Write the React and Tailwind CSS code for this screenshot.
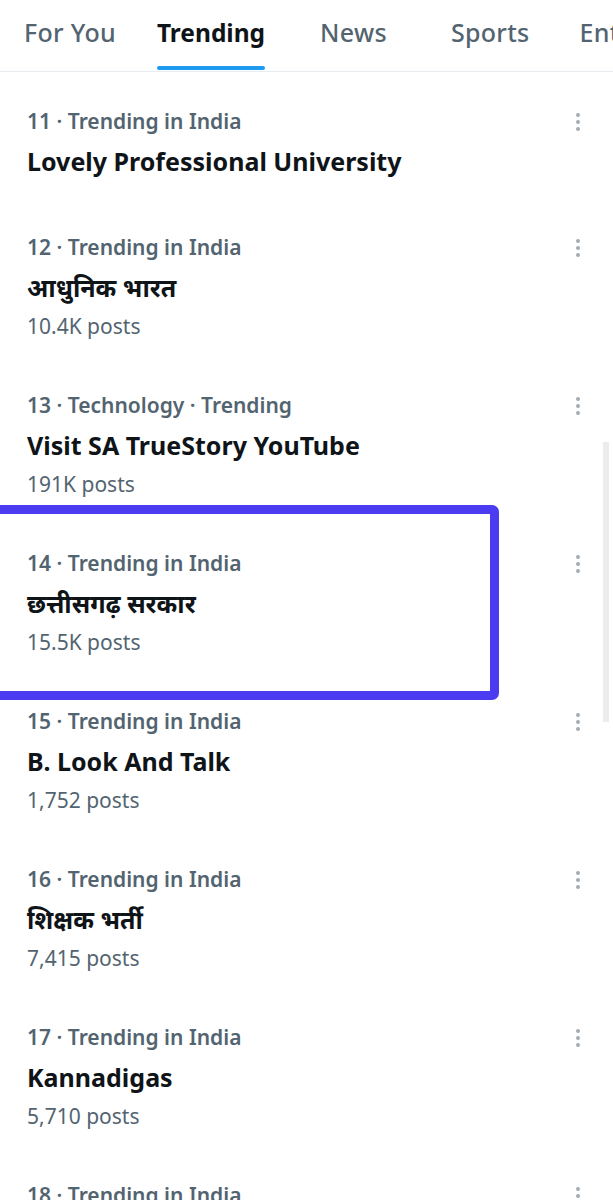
const tabs = [
  { label: "For You", active: false, cls: "ml-[24px]" },
  { label: "Trending", active: true, cls: "ml-[41px]" },
  { label: "News", active: false, cls: "ml-[55px]" },
  { label: "Sports", active: false, cls: "ml-[64px]" },
  { label: "Entertainment", active: false, cls: "ml-[50px]" },
];

const trends = [
  { rank: 11, cat: "Trending in India", title: "Lovely Professional University" },
  { rank: 12, cat: "Trending in India", title: "आधुनिक भारत", posts: "10.4K posts" },
  { rank: 13, cat: "Technology · Trending", title: "Visit SA TrueStory YouTube", posts: "191K posts" },
  { rank: 14, cat: "Trending in India", title: "छत्तीसगढ़ सरकार", posts: "15.5K posts", marked: true },
  { rank: 15, cat: "Trending in India", title: "B. Look And Talk", posts: "1,752 posts" },
  { rank: 16, cat: "Trending in India", title: "शिक्षक भर्ती", posts: "7,415 posts" },
  { rank: 17, cat: "Trending in India", title: "Kannadigas", posts: "5,710 posts" },
  { rank: 18, cat: "Trending in India", title: "Trending topic", posts: "1,000 posts" },
];

const Dots = () => (
  <svg width="8" height="20" viewBox="0 0 8 20" className="text-[#a3acb2]">
    <circle cx="4" cy="3" r="2" fill="currentColor" />
    <circle cx="4" cy="10" r="2" fill="currentColor" />
    <circle cx="4" cy="17" r="2" fill="currentColor" />
  </svg>
);

const TrendItem = ({ item }) => (
  <div className="relative py-[23px] pl-[27px] pr-[31px]">
    {item.marked && (
      <div className="absolute top-[-19px] bottom-[-18px] left-[-12px] w-[511px] border-[9px] border-[#4b3cf2] rounded-[7px] pointer-events-none" />
    )}
    <div className="flex items-center justify-between h-[34px]">
      <span className="text-[21px] font-semibold text-[#536471]">
        {item.rank} · {item.cat}
      </span>
      <Dots />
    </div>
    <div className="h-[46px] flex items-center text-[25px] font-bold text-[#0f1419] whitespace-nowrap">
      {item.title}
    </div>
    {item.posts && (
      <div className="h-[32px] flex items-center text-[21px] text-[#536471]">
        {item.posts}
      </div>
    )}
  </div>
);

export default function App() {
  return (
    <div
      className="relative w-[613px] h-[1200px] overflow-hidden bg-white"
      style={{ fontFamily: '"Noto Sans", "Noto Sans Devanagari", "Liberation Sans", sans-serif' }}
    >
      <div className="flex h-[72px] border-b border-[#e6ecf0] whitespace-nowrap">
        {tabs.map((t) => (
          <div key={t.label} className={`relative flex items-center h-full pb-[5px] shrink-0 ${t.cls}`}>
            <span
              className={
                t.active
                  ? "text-[24.5px] font-bold text-[#0f1419]"
                  : "text-[25px] font-medium text-[#536471] tracking-[0.3px]"
              }
            >
              {t.label}
            </span>
            {t.active && (
              <div className="absolute left-0 right-0 bottom-[1px] h-[4px] rounded-full bg-[#1d9bf0]" />
            )}
          </div>
        ))}
      </div>

      <div className="pt-[10px]">
        {trends.map((item) => (
          <TrendItem key={item.rank} item={item} />
        ))}
      </div>

      <div className="absolute right-[4px] top-[442px] h-[280px] w-[6px] bg-[#ececec]" />
    </div>
  );
}
